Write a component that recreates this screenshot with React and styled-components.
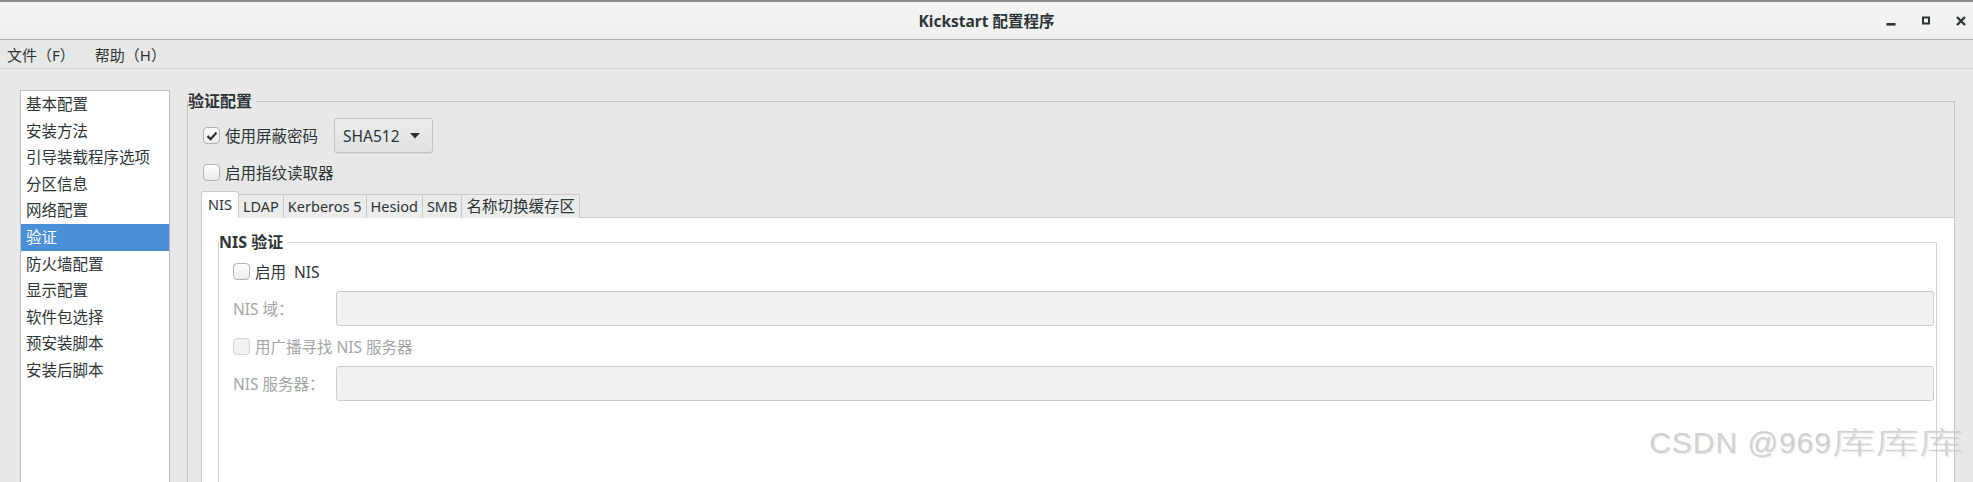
import React from "react";
import styled, { createGlobalStyle } from "styled-components";

const GlobalStyle = createGlobalStyle`
  html, body {
    margin: 0;
    padding: 0;
  }
  body {
    font-family: "Noto Sans", "Noto Sans CJK SC", sans-serif;
    color: #2e3436;
    background: #e8e8e8;
  }
  * {
    box-sizing: border-box;
  }
`;

const Window = styled.div`
  position: relative;
  width: 1973px;
  height: 482px;
  overflow: hidden;
  display: flex;
  flex-direction: column;
  background: #e8e8e8;
  font-size: 15.5px;
`;

const TitleBar = styled.div`
  flex: none;
  height: 40px;
  display: grid;
  grid-template-columns: 1fr auto 1fr;
  align-items: center;
  background: linear-gradient(#f4f4f4, #f0f0f0);
  border-top: 2px solid #8e8e8e;
  border-bottom: 1px solid #b3b3b3;
`;

const Title = styled.div`
  grid-column: 2;
  font-weight: bold;
  font-size: 15.5px;
  color: #2e3436;
`;

const Controls = styled.div`
  grid-column: 3;
  justify-self: end;
  display: flex;
  align-items: center;
  gap: 25px;
  padding-right: 7px;
  svg {
    display: block;
  }
`;

const MenuBar = styled.div`
  flex: none;
  height: 29px;
  display: flex;
  align-items: center;
  gap: 20px;
  padding-left: 7px;
  border-bottom: 1px solid #d6d6d6;
  font-size: 15px;
`;

const Body = styled.div`
  flex: 1;
  min-height: 0;
  display: flex;
  align-items: flex-start;
  gap: 17px;
  padding: 21px 0 0 20px;
`;

const Sidebar = styled.div`
  flex: none;
  width: 150px;
  height: 420px;
  background: #fff;
  border: 1px solid #bdbdbd;
  border-bottom: none;
  display: flex;
  flex-direction: column;
`;

const SidebarItem = styled.div`
  height: 26.6px;
  line-height: 26.6px;
  padding-left: 5px;
  white-space: nowrap;
  background: ${(p) => (p.$active ? "#4a90d9" : "transparent")};
  color: ${(p) => (p.$active ? "#fff" : "#2e3436")};
`;

const Frame = styled.fieldset`
  flex: 1;
  min-width: 0;
  height: 420px;
  margin: 1px 18px 0 0;
  padding: 0;
  border: 1px solid #c6c6c6;
  border-bottom: none;
`;

const Legend = styled.legend`
  padding: 0 4px 0 0;
  margin: 0;
  font-weight: bold;
  font-size: 16px;
  line-height: 20px;
  color: #2e3436;
`;

const FrameBody = styled.div`
  padding: 7px 0 0 13px;
  display: flex;
  flex-direction: column;
`;

const CheckRow = styled.div`
  display: flex;
  align-items: center;
  height: ${(p) => p.$h || 23}px;
  margin-top: ${(p) => p.$mt || 0}px;
  padding-left: ${(p) => p.$pl || 0}px;
  grid-column: ${(p) => (p.$span ? "1 / -1" : "auto")};
  color: ${(p) => (p.$disabled ? "#a3a5a5" : "#2e3436")};
  white-space: pre;
`;

const Box = styled.span`
  flex: none;
  width: 17px;
  height: 17px;
  margin-right: 5px;
  border-radius: 4px;
  border: 1px solid ${(p) => (p.$disabled ? "#d3d3d3" : "#b3b3b3")};
  background: ${(p) =>
    p.$disabled ? "#f2f2f2" : "linear-gradient(#ffffff, #ebebeb)"};
  display: flex;
  align-items: center;
  justify-content: center;
`;

const DropButton = styled.div`
  display: flex;
  align-items: center;
  gap: 10px;
  height: 35px;
  margin-left: 16px;
  padding: 0 12px 0 8px;
  border: 1px solid #c2c2c2;
  border-radius: 3px;
  background: linear-gradient(#ececec, #e2e2e2);
  box-shadow: 0 1px 0 rgba(0, 0, 0, 0.06);
  font-size: 15.5px;
`;

const TabStrip = styled.div`
  display: flex;
  align-items: flex-end;
  height: 27px;
  margin-top: 7px;
  margin-bottom: -1px;
`;

const Tab = styled.div`
  position: relative;
  z-index: ${(p) => (p.$active ? 1 : 0)};
  height: ${(p) => (p.$active ? 27 : 24)}px;
  line-height: ${(p) => (p.$active ? 25 : 22)}px;
  padding: 0 ${(p) => (p.$active ? 6 : 4)}px;
  margin-left: -1px;
  border: 1px solid #cacaca;
  border-bottom: none;
  border-radius: ${(p) => (p.$active ? "3px 3px 0 0" : "2px 2px 0 0")};
  background: ${(p) => (p.$active ? "#fff" : "#ececec")};
  font-size: ${(p) => (p.$cjk ? 15.5 : 14.5)}px;
  white-space: nowrap;
  &:first-child {
    margin-left: 0;
  }
`;

const Page = styled.div`
  background: #fff;
  border-left: 1px solid #cacaca;
  border-top: 1px solid #cacaca;
  height: 400px;
  padding: 14px 17px 0 16px;
`;

const InnerFrame = styled.fieldset`
  margin: 0;
  padding: 8px 2px 0 0;
  height: 320px;
  border: 1px solid #d2d2d2;
  border-bottom: none;
`;

const FormGrid = styled.div`
  display: grid;
  grid-template-columns: 103px 1fr;
  row-gap: 9px;
  align-items: center;
  margin-left: 14px;
`;

const FieldLabel = styled.div`
  color: #a3a5a5;
  white-space: pre;
`;

const Field = styled.div`
  height: 35px;
  border: 1px solid #cbcbcb;
  border-radius: 3px;
  background: #f1f1f1;
`;

const Watermark = styled.div`
  position: absolute;
  right: 8px;
  bottom: 20px;
  display: flex;
  align-items: baseline;
  font-family: "Liberation Sans", "Noto Sans CJK SC", sans-serif;
  font-size: 30px;
  letter-spacing: 1px;
  color: rgba(208, 208, 208, 0.95);
  text-shadow: 1px 1px 1px rgba(0, 0, 0, 0.1);
  white-space: pre;
`;

const WideCjk = styled.span`
  display: inline-block;
  width: 133px;
  letter-spacing: 0;
  font-weight: 300;
  transform: scaleX(1.45);
  transform-origin: left center;
`;

function Check({ checked, disabled }) {
  return (
    <Box $disabled={disabled}>
      {checked && (
        <svg width="12" height="12" viewBox="0 0 12 12">
          <path d="M1.5 6.2 L4.6 9.2 L10.5 2.6" fill="none" stroke="#2e3436" strokeWidth="2.3" />
        </svg>
      )}
    </Box>
  );
}

const items = [
  "基本配置",
  "安装方法",
  "引导装载程序选项",
  "分区信息",
  "网络配置",
  "验证",
  "防火墙配置",
  "显示配置",
  "软件包选择",
  "预安装脚本",
  "安装后脚本",
];

const tabs = ["NIS", "LDAP", "Kerberos 5", "Hesiod", "SMB", "名称切换缓存区"];

export default function App() {
  return (
    <>
      <GlobalStyle />
      <Window>
        <TitleBar>
          <Title>Kickstart 配置程序</Title>
          <Controls>
            <svg width="10" height="10" viewBox="0 0 10 10">
              <rect x="0.5" y="7" width="9" height="2.6" fill="#2e3436" />
            </svg>
            <svg width="10" height="10" viewBox="0 0 10 10">
              <rect x="2" y="1.5" width="6" height="6" fill="none" stroke="#2e3436" strokeWidth="2" />
            </svg>
            <svg width="10" height="10" viewBox="0 0 10 10">
              <path d="M1 1 L9 9 M9 1 L1 9" stroke="#2e3436" strokeWidth="2.4" />
            </svg>
          </Controls>
        </TitleBar>
        <MenuBar>
          <span>文件（F）</span>
          <span>帮助（H）</span>
        </MenuBar>
        <Body>
          <Sidebar>
            {items.map((it, i) => (
              <SidebarItem key={it} $active={i === 5}>
                {it}
              </SidebarItem>
            ))}
          </Sidebar>
          <Frame>
            <Legend>验证配置</Legend>
            <FrameBody>
              <CheckRow $h={35} $pl={2}>
                <Check checked />
                使用屏蔽密码
                <DropButton>
                  SHA512
                  <svg width="10" height="6" viewBox="0 0 10 6">
                    <path d="M0 0 L10 0 L5 5.5 Z" fill="#2e3436" />
                  </svg>
                </DropButton>
              </CheckRow>
              <CheckRow $mt={8} $pl={2}>
                <Check />
                启用指纹读取器
              </CheckRow>
              <TabStrip>
                {tabs.map((t, i) => (
                  <Tab key={t} $active={i === 0} $cjk={i === 5}>
                    {t}
                  </Tab>
                ))}
              </TabStrip>
              <Page>
                <InnerFrame>
                  <Legend>NIS 验证</Legend>
                  <FormGrid>
                    <CheckRow $span $h={22}>
                      <Check />
                      {"启用  NIS"}
                    </CheckRow>
                    <FieldLabel>NIS 域：</FieldLabel>
                    <Field />
                    <CheckRow $span $h={22} $disabled>
                      <Check disabled />
                      {"用广播寻找 NIS 服务器"}
                    </CheckRow>
                    <FieldLabel>NIS 服务器：</FieldLabel>
                    <Field />
                  </FormGrid>
                </InnerFrame>
              </Page>
            </FrameBody>
          </Frame>
        </Body>
        <Watermark>
          {"CSDN @969"}
          <WideCjk>库库库</WideCjk>
        </Watermark>
      </Window>
    </>
  );
}
